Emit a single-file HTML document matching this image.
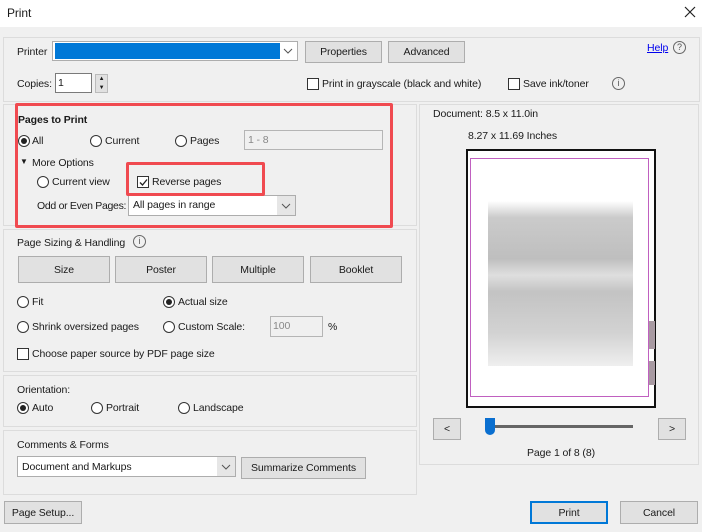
<!DOCTYPE html>
<html><head><style>
*{box-sizing:border-box;margin:0;padding:0}
body{width:702px;height:532px;background:#f0f0f0;font-family:"Liberation Sans",sans-serif;font-size:10.5px;letter-spacing:-0.1px;color:#1a1a1a;position:relative;overflow:hidden;white-space:nowrap}
.a{position:absolute}
.panel{position:absolute;border:1px solid #dcdcdc;background:#f0f0f0}
.btn{position:absolute;background:#e1e1e1;border:1px solid #adadad;display:flex;align-items:center;justify-content:center}
.rad{position:absolute;width:12px;height:12px;border:1px solid #333;border-radius:50%;background:#fff}
.rad.on::after{content:"";position:absolute;left:2px;top:2px;width:6px;height:6px;border-radius:50%;background:#222}
.chk{position:absolute;width:12px;height:12px;border:1px solid #333;background:#fff}
.inp{position:absolute;background:#fff;border:1px solid #7a7a7a}
.dis{position:absolute;border:1px solid #b5b5b5;background:#f0f0f0;color:#888}
.sel{position:absolute;background:#fff;border:1px solid #adadad}
.sel .dd{position:absolute;right:0;top:0;bottom:0;width:18px;background:#e6e6e6}
.bold{font-weight:bold}
</style></head><body>
<div class="a" style="left:0;top:0;width:702px;height:27px;background:#fff"></div>
<div class="a" style="left:7px;top:6px;font-size:12px">Print</div>
<svg class="a" style="left:684px;top:6px" width="12" height="12"><path d="M1 1L11 11M11 1L1 11" stroke="#222" stroke-width="1.2"/></svg>

<div class="panel" style="left:3px;top:37px;width:697px;height:65px"></div>
<div class="a" style="left:17px;top:46px">Printer</div>
<div class="sel" style="left:52px;top:41px;width:246px;height:20px;background:#fff">
 <div class="a" style="left:2px;top:1px;width:225px;height:16px;background:#0078d7"></div>
 <svg class="a" style="right:4px;top:6px" width="10" height="6"><path d="M1 1L5 5L9 1" stroke="#555" fill="none"/></svg>
</div>
<div class="btn" style="left:305px;top:41px;width:77px;height:22px">Properties</div>
<div class="btn" style="left:388px;top:41px;width:77px;height:22px">Advanced</div>
<div class="a" style="left:647px;top:42px;color:#0000ee;text-decoration:underline">Help</div>
<div class="a" style="left:673px;top:41px;width:13px;height:13px;border:1px solid #666;border-radius:50%;font-size:9px;text-align:center;line-height:11px;color:#555">?</div>
<div class="a" style="left:17px;top:78px">Copies:</div>
<div class="inp" style="left:55px;top:73px;width:37px;height:20px;padding-left:2px;line-height:18px">1</div>
<div class="a" style="left:95px;top:74px;width:13px;height:19px;background:#e1e1e1;border:1px solid #bbb;font-size:6px;text-align:center;line-height:9px">▲<br>▼</div>
<div class="chk" style="left:307px;top:78px"></div>
<div class="a" style="left:322px;top:78px">Print in grayscale (black and white)</div>
<div class="chk" style="left:508px;top:78px"></div>
<div class="a" style="left:523px;top:78px">Save ink/toner</div>
<div class="a" style="left:612px;top:77px;width:13px;height:13px;border:1px solid #666;border-radius:50%;font-size:9px;text-align:center;line-height:11px;color:#555">i</div>

<div class="panel" style="left:3px;top:104px;width:414px;height:122px"></div>
<div class="a bold" style="left:18px;top:114px">Pages to Print</div>
<div class="rad on" style="left:18px;top:135px"></div><div class="a" style="left:32px;top:135px">All</div>
<div class="rad" style="left:90px;top:135px"></div><div class="a" style="left:105px;top:135px">Current</div>
<div class="rad" style="left:175px;top:135px"></div><div class="a" style="left:190px;top:135px">Pages</div>
<div class="dis" style="left:244px;top:130px;width:139px;height:20px;padding-left:3px;line-height:18px">1 - 8</div>
<div class="a" style="left:20px;top:157px;font-size:8px">▼</div><div class="a" style="left:32px;top:157px">More Options</div>
<div class="rad" style="left:37px;top:176px"></div><div class="a" style="left:52px;top:176px">Current view</div>
<div class="chk" style="left:137px;top:176px"></div>
<svg class="a" style="left:138px;top:177px" width="11" height="11"><path d="M2 5.5L4.5 8L9 2.5" stroke="#222" fill="none" stroke-width="1.3"/></svg>
<div class="a" style="left:152px;top:176px">Reverse pages</div>
<div class="a" style="left:37px;top:200px;letter-spacing:-0.3px">Odd or Even Pages:</div>
<div class="sel" style="left:128px;top:195px;width:168px;height:21px">
 <div class="a" style="left:4px;top:3px">All pages in range</div>
 <div class="dd"></div>
 <svg class="a" style="right:4px;top:7px" width="10" height="6"><path d="M1 1L5 5L9 1" stroke="#555" fill="none"/></svg>
</div>
<div class="a" style="left:15px;top:103px;width:378px;height:125px;border:3px solid #f04a50;border-radius:2px"></div>
<div class="a" style="left:126px;top:162px;width:139px;height:34px;border:3px solid #f04a50;border-radius:2px"></div>

<div class="panel" style="left:3px;top:229px;width:414px;height:143px"></div>
<div class="a" style="left:17px;top:237px">Page Sizing &amp; Handling</div>
<div class="a" style="left:133px;top:235px;width:13px;height:13px;border:1px solid #666;border-radius:50%;font-size:9px;text-align:center;line-height:11px;color:#555">i</div>
<div class="btn" style="left:18px;top:256px;width:92px;height:27px">Size</div>
<div class="btn" style="left:115px;top:256px;width:92px;height:27px">Poster</div>
<div class="btn" style="left:212px;top:256px;width:92px;height:27px">Multiple</div>
<div class="btn" style="left:310px;top:256px;width:92px;height:27px">Booklet</div>
<div class="rad" style="left:17px;top:296px"></div><div class="a" style="left:32px;top:296px">Fit</div>
<div class="rad on" style="left:163px;top:296px"></div><div class="a" style="left:178px;top:296px">Actual size</div>
<div class="rad" style="left:17px;top:321px"></div><div class="a" style="left:32px;top:321px">Shrink oversized pages</div>
<div class="rad" style="left:163px;top:321px"></div><div class="a" style="left:178px;top:321px">Custom Scale:</div>
<div class="dis" style="left:270px;top:316px;width:53px;height:21px;padding-left:2px;line-height:19px">100</div>
<div class="a" style="left:328px;top:321px">%</div>
<div class="chk" style="left:17px;top:348px"></div><div class="a" style="left:32px;top:348px">Choose paper source by PDF page size</div>

<div class="panel" style="left:3px;top:375px;width:414px;height:52px"></div>
<div class="a" style="left:17px;top:384px">Orientation:</div>
<div class="rad on" style="left:17px;top:402px"></div><div class="a" style="left:32px;top:402px">Auto</div>
<div class="rad" style="left:91px;top:402px"></div><div class="a" style="left:106px;top:402px">Portrait</div>
<div class="rad" style="left:178px;top:402px"></div><div class="a" style="left:193px;top:402px">Landscape</div>

<div class="panel" style="left:3px;top:430px;width:414px;height:65px"></div>
<div class="a" style="left:17px;top:439px">Comments &amp; Forms</div>
<div class="sel" style="left:17px;top:456px;width:219px;height:21px">
 <div class="a" style="left:4px;top:4px">Document and Markups</div>
 <div class="dd"></div>
 <svg class="a" style="right:4px;top:7px" width="10" height="6"><path d="M1 1L5 5L9 1" stroke="#555" fill="none"/></svg>
</div>
<div class="btn" style="left:241px;top:457px;width:125px;height:22px">Summarize Comments</div>

<div class="panel" style="left:419px;top:104px;width:280px;height:361px"></div>
<div class="a" style="left:433px;top:108px">Document: 8.5 x 11.0in</div>
<div class="a" style="left:468px;top:130px">8.27 x 11.69 Inches</div>
<div class="a" style="left:466px;top:149px;width:190px;height:259px;border:2px solid #111;background:#fff">
 <div class="a" style="left:2px;top:7px;width:179px;height:239px;border:1px solid #c060c0"></div>
 <div class="a" style="left:20px;top:50px;width:145px;height:165px;background:linear-gradient(#fff 0%,#c8c8c8 10%,#bbb 35%,#ddd 45%,#c0c0c0 55%,#d0d0d0 80%,#eee 100%);opacity:.95"></div>
 <div class="a" style="left:181px;top:170px;width:6px;height:28px;background:#a89aa2"></div>
 <div class="a" style="left:181px;top:210px;width:6px;height:24px;background:#a89aa2"></div>
</div>
<div class="btn" style="left:433px;top:418px;width:28px;height:22px">&lt;</div>
<div class="a" style="left:490px;top:425px;width:143px;height:3px;background:#666"></div>
<div class="a" style="left:485px;top:418px;width:10px;height:17px;background:#0a6fd0;border-radius:0 0 5px 5px"></div>
<div class="btn" style="left:658px;top:418px;width:28px;height:22px">&gt;</div>
<div class="a" style="left:527px;top:447px">Page 1 of 8 (8)</div>

<div class="btn" style="left:4px;top:501px;width:78px;height:23px">Page Setup...</div>
<div class="btn" style="left:530px;top:501px;width:78px;height:23px;border:2px solid #0078d7">Print</div>
<div class="btn" style="left:620px;top:501px;width:78px;height:23px">Cancel</div>
</body></html>
